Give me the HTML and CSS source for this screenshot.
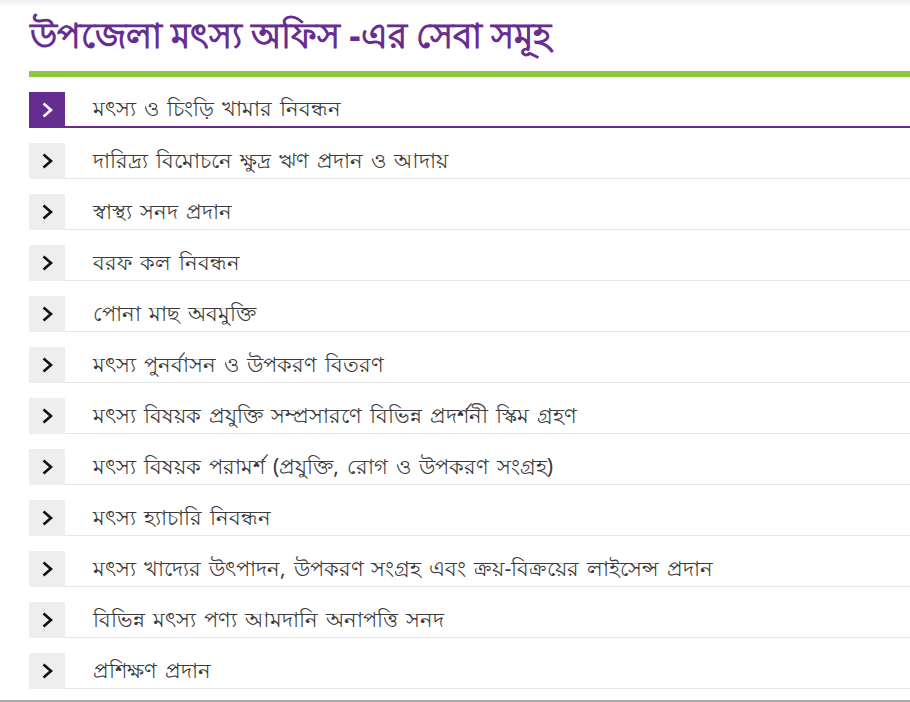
FILE: index.html
```html
<!DOCTYPE html>
<html lang="bn">
<head>
<meta charset="utf-8">
<title>সেবা সমূহ</title>
<link rel="stylesheet" href="styles.css">
</head>
<body>
<div class="page">
  <div class="topshade"></div>
  <h1 class="title">উপজেলা মৎস্য অফিস -এর সেবা সমূহ</h1>
  <div class="rule"></div>
  <ul class="services">
    <li class="item active"><span class="icon"><svg viewBox="0 0 12 16" width="12" height="16"><path d="M2.5 1.5 L10 8 L2.5 14.5" fill="none" stroke="currentColor" stroke-width="2.6"/></svg></span><span class="label">মৎস্য ও চিংড়ি খামার নিবন্ধন</span></li>
    <li class="item"><span class="icon"><svg viewBox="0 0 12 16" width="12" height="16"><path d="M2.5 1.5 L10 8 L2.5 14.5" fill="none" stroke="currentColor" stroke-width="2.6"/></svg></span><span class="label">দারিদ্র্য বিমোচনে ক্ষুদ্র ঋণ প্রদান ও আদায়</span></li>
    <li class="item"><span class="icon"><svg viewBox="0 0 12 16" width="12" height="16"><path d="M2.5 1.5 L10 8 L2.5 14.5" fill="none" stroke="currentColor" stroke-width="2.6"/></svg></span><span class="label">স্বাস্থ্য সনদ প্রদান</span></li>
    <li class="item"><span class="icon"><svg viewBox="0 0 12 16" width="12" height="16"><path d="M2.5 1.5 L10 8 L2.5 14.5" fill="none" stroke="currentColor" stroke-width="2.6"/></svg></span><span class="label">বরফ কল নিবন্ধন</span></li>
    <li class="item"><span class="icon"><svg viewBox="0 0 12 16" width="12" height="16"><path d="M2.5 1.5 L10 8 L2.5 14.5" fill="none" stroke="currentColor" stroke-width="2.6"/></svg></span><span class="label">পোনা মাছ অবমুক্তি</span></li>
    <li class="item"><span class="icon"><svg viewBox="0 0 12 16" width="12" height="16"><path d="M2.5 1.5 L10 8 L2.5 14.5" fill="none" stroke="currentColor" stroke-width="2.6"/></svg></span><span class="label">মৎস্য পুনর্বাসন ও উপকরণ বিতরণ</span></li>
    <li class="item"><span class="icon"><svg viewBox="0 0 12 16" width="12" height="16"><path d="M2.5 1.5 L10 8 L2.5 14.5" fill="none" stroke="currentColor" stroke-width="2.6"/></svg></span><span class="label">মৎস্য বিষয়ক প্রযুক্তি সম্প্রসারণে বিভিন্ন প্রদর্শনী স্কিম গ্রহণ</span></li>
    <li class="item"><span class="icon"><svg viewBox="0 0 12 16" width="12" height="16"><path d="M2.5 1.5 L10 8 L2.5 14.5" fill="none" stroke="currentColor" stroke-width="2.6"/></svg></span><span class="label">মৎস্য বিষয়ক পরামর্শ (প্রযুক্তি, রোগ ও উপকরণ সংগ্রহ)</span></li>
    <li class="item"><span class="icon"><svg viewBox="0 0 12 16" width="12" height="16"><path d="M2.5 1.5 L10 8 L2.5 14.5" fill="none" stroke="currentColor" stroke-width="2.6"/></svg></span><span class="label">মৎস্য হ্যাচারি নিবন্ধন</span></li>
    <li class="item"><span class="icon"><svg viewBox="0 0 12 16" width="12" height="16"><path d="M2.5 1.5 L10 8 L2.5 14.5" fill="none" stroke="currentColor" stroke-width="2.6"/></svg></span><span class="label">মৎস্য খাদ্যের উৎপাদন, উপকরণ সংগ্রহ এবং ক্রয়-বিক্রয়ের লাইসেন্স প্রদান</span></li>
    <li class="item"><span class="icon"><svg viewBox="0 0 12 16" width="12" height="16"><path d="M2.5 1.5 L10 8 L2.5 14.5" fill="none" stroke="currentColor" stroke-width="2.6"/></svg></span><span class="label">বিভিন্ন মৎস্য পণ্য আমদানি অনাপত্তি সনদ</span></li>
    <li class="item"><span class="icon"><svg viewBox="0 0 12 16" width="12" height="16"><path d="M2.5 1.5 L10 8 L2.5 14.5" fill="none" stroke="currentColor" stroke-width="2.6"/></svg></span><span class="label">প্রশিক্ষণ প্রদান</span></li>
  </ul>
</div>
</body>
</html>
```

FILE: styles.css
```css
html, body {
  margin: 0;
  padding: 0;
  background: #ffffff;
}
body {
  font-family: "Noto Sans", "DejaVu Sans", sans-serif;
  overflow: hidden;
}
.page {
  height: 700px;
  border-bottom: 2px solid #a7a9ac;
}
.topshade {
  height: 7px;
  background: linear-gradient(#f1f1f1, #ffffff);
}
.title {
  margin: 0;
  padding: 0 0 0 30px;
  height: 64px;
  box-sizing: border-box;
  font-size: 35px;
  line-height: 56px;
  font-weight: bold;
  color: #672d91;
}
.rule {
  margin: 0 0 0 29px;
  height: 6px;
  background: #8dc63f;
}
.services {
  list-style: none;
  margin: 15px 0 0 29px;
  padding: 0;
  display: flex;
  flex-direction: column;
  gap: 15px;
}
.item {
  display: flex;
  height: 36px;
}
.icon {
  width: 36px;
  height: 36px;
  flex: none;
  background: #eeeeee;
  color: #111111;
  display: flex;
  align-items: center;
  justify-content: center;
}
.icon svg {
  display: block;
}
.label {
  flex: 1;
  border-bottom: 1px solid #e6e6e6;
  padding-left: 28px;
  font-size: 21px;
  word-spacing: 2.5px;
  line-height: 34px;
  color: #3a3a3a;
}
.item.active .icon {
  background: #662d91;
  color: #ffffff;
}
.item.active .label {
  border-bottom: 2px solid #662d91;
  line-height: 33px;
}
```
